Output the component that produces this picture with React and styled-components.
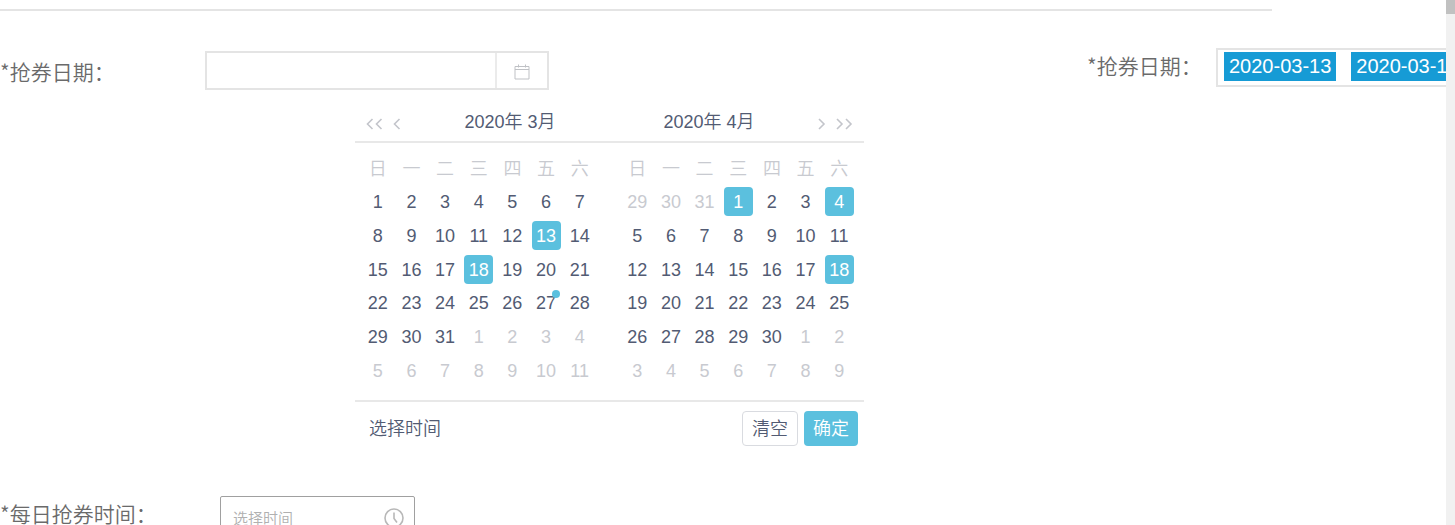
import React, { useState } from 'react';
import styled, { ThemeProvider, createGlobalStyle } from 'styled-components';

const theme = {
  line: '#e4e4e4',
  labelText: '#6a6a6a',
  calText: '#525b73',
  calMuted: '#c8cad0',
  calActive: '#5bc0de',
  tag: '#169bd5',
};

const GlobalStyle = createGlobalStyle`
  * {
    box-sizing: border-box;
  }
  body {
    margin: 0;
    background-color: #ffffff;
    font-family: 'Liberation Sans', 'Noto Sans CJK SC', sans-serif;
  }
  button, input {
    font-family: inherit;
  }
`;

const Page = styled.div`
  display: flex;
  height: 100vh;
  overflow: hidden;
`;

const Main = styled.main`
  flex: 1;
  min-width: 0;
  overflow: hidden;
  padding-top: 9px;
`;

const ScrollTrack = styled.div`
  flex: none;
  width: 9px;
  background-color: #f1f1f1;
`;

const ScrollThumb = styled.div`
  height: 14px;
  background-color: #c1c1c1;
`;

const Divider = styled.hr`
  width: 88%;
  height: 2px;
  margin: 0 0 37px;
  border: none;
  background-color: ${(props) => props.theme.line};
`;

const DateRow = styled.div`
  display: flex;
  justify-content: space-between;
  align-items: flex-start;
`;

const LeftColumn = styled.div`
  padding-top: 3px;
`;

const Field = styled.div`
  display: flex;
  align-items: ${(props) => props.$align || 'flex-start'};
`;

const Label = styled.label`
  flex: none;
  width: ${(props) => props.$width};
  font-family: 'Noto Sans CJK SC', sans-serif;
  font-weight: 350;
  font-size: 21px;
  line-height: 34px;
  white-space: nowrap;
  color: ${(props) => props.theme.labelText};
`;

const DateBox = styled.div`
  display: flex;
  width: 344px;
  height: 39px;
  border: 2px solid ${(props) => props.theme.line};
`;

const DateInput = styled.input`
  flex: 1;
  min-width: 0;
  padding: 0 12px;
  border: none;
  outline: none;
  font-size: 18px;
  color: ${(props) => props.theme.calText};
`;

const IconButton = styled.button`
  display: flex;
  align-items: center;
  justify-content: center;
  width: 52px;
  padding: 3px 0 0;
  border: none;
  border-left: 2px solid #ebebeb;
  background: none;
  cursor: pointer;
`;

const TagField = styled(Field)`
  flex: none;
  width: 359px;
  overflow: hidden;
`;

const TagBox = styled.div`
  flex: none;
  display: flex;
  gap: 15px;
  width: 344px;
  height: 39px;
  padding: 2px 6px;
  border: 2px solid ${(props) => props.theme.line};
  overflow: hidden;
`;

const Tag = styled.span`
  flex: none;
  height: 29px;
  padding: 0 5px;
  font-size: 20px;
  line-height: 28px;
  white-space: nowrap;
  color: #ffffff;
  background-color: ${(props) => props.theme.tag};
`;

const Calendar = styled.section`
  width: 509px;
  margin: 11px 0 50px 355px;
  color: ${(props) => props.theme.calText};
`;

const CalendarHeader = styled.header`
  display: flex;
  justify-content: space-between;
  align-items: center;
  height: 42px;
  padding: 2px 11px 0;
  border-bottom: 2px solid #e8e8e8;
`;

const Nav = styled.div`
  display: flex;
  gap: 10px;
  padding-top: 4px;
`;

const NavButton = styled.button`
  display: flex;
  padding: 0;
  border: none;
  background: none;
  cursor: pointer;
`;

const Titles = styled.div`
  display: flex;
  gap: 108px;
`;

const Title = styled.h2`
  margin: 0;
  font-size: 18px;
  font-weight: 350;
  line-height: 24px;
  white-space: nowrap;
`;

const Months = styled.div`
  display: grid;
  grid-template-columns: 1fr 1fr;
  gap: 24px;
  padding: 9px 8px 12px 6px;
`;

const Month = styled.table`
  width: 100%;
  height: 236px;
  table-layout: fixed;
  border-collapse: collapse;
`;

const WeekDay = styled.th`
  height: 33px;
  padding: 0;
  font-size: 18px;
  font-weight: 350;
  line-height: 28px;
  color: ${(props) => props.theme.calMuted};
`;

const Cell = styled.td`
  height: 33px;
  padding: 0;
  text-align: center;
`;

const Day = styled.button`
  position: relative;
  display: block;
  width: 29px;
  height: 29px;
  margin: 0 auto;
  padding: 0;
  border: none;
  border-radius: 4px;
  font-size: 18px;
  line-height: 28px;
  color: ${(props) =>
    props.$selected ? '#ffffff' : props.$muted ? props.theme.calMuted : props.theme.calText};
  background-color: ${(props) => (props.$selected ? props.theme.calActive : 'transparent')};
  cursor: pointer;
`;

const Dot = styled.span`
  position: absolute;
  top: 1px;
  right: 1px;
  width: 8px;
  height: 8px;
  border-radius: 50%;
  background-color: ${(props) => props.theme.calActive};
`;

const CalendarFooter = styled.footer`
  display: flex;
  align-items: center;
  gap: 6px;
  padding: 9px 6px 0 14px;
  border-top: 2px solid #e8e8e8;
`;

const TextButton = styled.button`
  margin-right: auto;
  padding: 0;
  border: none;
  background: none;
  font-size: 18px;
  font-weight: 350;
  line-height: 24px;
  color: ${(props) => props.theme.calText};
  cursor: pointer;
`;

const ActionButton = styled.button`
  height: 35px;
  padding: 0 9px;
  border: ${(props) => (props.$primary ? 'none' : '1px solid #d9dbe0')};
  border-radius: 4px;
  font-size: 18px;
  font-weight: 350;
  line-height: 32px;
  color: ${(props) => (props.$primary ? '#ffffff' : props.theme.calText)};
  background-color: ${(props) => (props.$primary ? props.theme.calActive : '#ffffff')};
  cursor: pointer;
`;

const TimeBox = styled.div`
  display: flex;
  align-items: center;
  width: 195px;
  height: 44px;
  margin-left: 15px;
  padding: 0 10px 0 12px;
  border: 1px solid #a0a0a0;
  border-radius: 2px;
`;

const TimeInput = styled.input`
  flex: 1;
  min-width: 0;
  padding: 0;
  border: none;
  outline: none;
  font-size: 15px;
  font-weight: 350;
  color: ${(props) => props.theme.labelText};

  &::placeholder {
    color: #b0b0b0;
    opacity: 1;
  }
`;

const CalendarIcon = () => (
  <svg width="16" height="16" viewBox="0 0 16 16" fill="none" stroke="#bfc1c5">
    <path d="M1 2.5h14v12.5H1zM1 5.5h14M4.5 0.5v3M11.5 0.5v3" />
  </svg>
);

const Chevron = ({ double, right }) => {
  const d = right ? 'M1 1l5 5-5 5' : 'M6.5 1l-5 5 5 5';
  return (
    <svg
      width={double ? 17 : 8}
      height="12"
      viewBox={double ? '0 0 17 12' : '0 0 8 12'}
      fill="none"
      stroke="#c3c5cb"
      strokeWidth="1.6"
    >
      <path d={d} />
      {double && <path d={d} transform="translate(9 0)" />}
    </svg>
  );
};

const ClockIcon = () => (
  <svg width="20" height="20" viewBox="0 0 20 20" fill="none" stroke="#b8b8b8" strokeWidth="1.6">
    <circle cx="10" cy="10" r="9" />
    <path d="M10 4.5v6l3 4" />
  </svg>
);

const weekDays = ['日', '一', '二', '三', '四', '五', '六'];

const months = [
  { key: '2020-03', title: '2020年 3月', before: [], days: 31, after: 11, marked: 27 },
  { key: '2020-04', title: '2020年 4月', before: [29, 30, 31], days: 30, after: 9 },
];

const range = (n) => Array.from({ length: n }, (_, i) => i + 1);

const getWeeks = (month) => {
  const cells = [
    ...month.before.map((day) => ({ day, muted: true })),
    ...range(month.days).map((day) => ({ day, id: `${month.key}-${day}` })),
    ...range(month.after).map((day) => ({ day, muted: true })),
  ];
  return range(6).map((n) => cells.slice((n - 1) * 7, n * 7));
};

const MonthTable = ({ month, selected, onToggle }) => (
  <Month aria-label={month.title}>
    <thead>
      <tr>
        {weekDays.map((name) => (
          <WeekDay key={name} scope="col">
            {name}
          </WeekDay>
        ))}
      </tr>
    </thead>
    <tbody>
      {getWeeks(month).map((week, i) => (
        <tr key={i}>
          {week.map((cell, j) => (
            <Cell key={j}>
              <Day
                type="button"
                $muted={cell.muted}
                $selected={selected.includes(cell.id)}
                onClick={() => cell.id && onToggle(cell.id)}
              >
                {cell.day}
                {!cell.muted && cell.day === month.marked && <Dot />}
              </Day>
            </Cell>
          ))}
        </tr>
      ))}
    </tbody>
  </Month>
);

const App = () => {
  const [selected, setSelected] = useState([
    '2020-03-13',
    '2020-03-18',
    '2020-04-1',
    '2020-04-4',
    '2020-04-18',
  ]);

  const handleToggle = (id) => {
    setSelected(selected.includes(id) ? selected.filter((s) => s !== id) : [...selected, id]);
  };

  return (
    <ThemeProvider theme={theme}>
      <GlobalStyle />
      <Page lang="zh-CN">
        <Main>
          <Divider />
          <DateRow>
            <LeftColumn>
              <Field $align="center">
                <Label htmlFor="date" $width="205px">
                  *抢券日期：
                </Label>
                <DateBox>
                  <DateInput id="date" type="text" />
                  <IconButton type="button" aria-label="日期">
                    <CalendarIcon />
                  </IconButton>
                </DateBox>
              </Field>
              <Calendar>
                <CalendarHeader>
                  <Nav>
                    <NavButton type="button" aria-label="上一年">
                      <Chevron double />
                    </NavButton>
                    <NavButton type="button" aria-label="上个月">
                      <Chevron />
                    </NavButton>
                  </Nav>
                  <Titles>
                    {months.map((month) => (
                      <Title key={month.key}>{month.title}</Title>
                    ))}
                  </Titles>
                  <Nav>
                    <NavButton type="button" aria-label="下个月">
                      <Chevron right />
                    </NavButton>
                    <NavButton type="button" aria-label="下一年">
                      <Chevron double right />
                    </NavButton>
                  </Nav>
                </CalendarHeader>
                <Months>
                  {months.map((month) => (
                    <MonthTable
                      key={month.key}
                      month={month}
                      selected={selected}
                      onToggle={handleToggle}
                    />
                  ))}
                </Months>
                <CalendarFooter>
                  <TextButton type="button">选择时间</TextButton>
                  <ActionButton type="button" onClick={() => setSelected([])}>
                    清空
                  </ActionButton>
                  <ActionButton type="button" $primary>
                    确定
                  </ActionButton>
                </CalendarFooter>
              </Calendar>
            </LeftColumn>
            <TagField>
              <Label as="span" $width="129px">
                *抢券日期：
              </Label>
              <TagBox>
                <Tag>2020-03-13</Tag>
                <Tag>2020-03-18</Tag>
              </TagBox>
            </TagField>
          </DateRow>
          <Field>
            <Label htmlFor="time" $width="205px">
              *每日抢券时间：
            </Label>
            <TimeBox>
              <TimeInput id="time" type="text" placeholder="选择时间" />
              <ClockIcon />
            </TimeBox>
          </Field>
        </Main>
        <ScrollTrack>
          <ScrollThumb />
        </ScrollTrack>
      </Page>
    </ThemeProvider>
  );
};

export default App;
